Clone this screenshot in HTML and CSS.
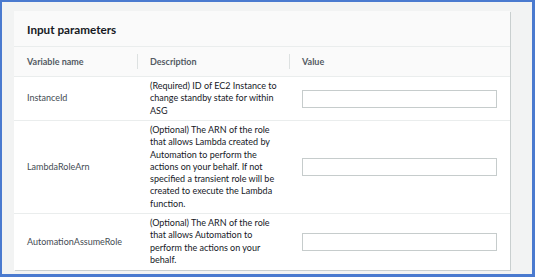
FILE: index.html
```html
<!DOCTYPE html>
<html lang="en">
<head>
  <meta charset="UTF-8">
  <title>Input parameters</title>
  <link rel="stylesheet" href="styles.css">
</head>
<body>
  <div class="frame">
    <div class="card">
      <div class="card-header">
        <h2>Input parameters</h2>
      </div>
      <table class="params">
        <thead>
          <tr>
            <th class="col-name">Variable name</th>
            <th class="col-desc">Description</th>
            <th class="col-value">Value</th>
          </tr>
        </thead>
        <tbody>
          <tr class="row-1">
            <td>InstanceId</td>
            <td class="desc">(Required) ID of EC2 Instance to change standby state for within ASG</td>
            <td><input type="text" class="value-input"></td>
          </tr>
          <tr class="row-2">
            <td>LambdaRoleArn</td>
            <td class="desc">(Optional) The ARN of the role that allows Lambda created by Automation to perform the actions on your behalf. If not specified a transient role will be created to execute the Lambda function.</td>
            <td><input type="text" class="value-input"></td>
          </tr>
          <tr class="row-3">
            <td>AutomationAssumeRole</td>
            <td class="desc">(Optional) The ARN of the role that allows Automation to perform the actions on your behalf.</td>
            <td><input type="text" class="value-input"></td>
          </tr>
        </tbody>
      </table>
    </div>
  </div>
</body>
</html>
```

FILE: styles.css
```css
body {
  margin: 0;
  font-family: Lato, 'Open Sans', sans-serif;
}

.frame {
  width: 535px;
  height: 277px;
  box-sizing: border-box;
  border: 2px solid #4a7acf;
  border-right-width: 3px;
  border-bottom-width: 3px;
  background: #f2f3f3;
  padding: 9px 22px 0 12px;
}

.card {
  width: 496px;
  height: 259px;
  background: #ffffff;
  box-shadow: 1px 1px 0 #c9cfcf;
  overflow: hidden;
}

.card-header {
  height: 36px;
  box-sizing: border-box;
  padding: 0 13px;
  display: flex;
  align-items: center;
  background: #fafafa;
  border-bottom: 1px solid #eaeded;
}

.card-header h2 {
  margin: 0;
  font-size: 11.7px;
  font-weight: 700;
  color: #16191f;
}

.params {
  width: 100%;
  border-collapse: collapse;
  table-layout: fixed;
}

.params th {
  height: 29px;
  padding: 0 13px;
  text-align: left;
  font-size: 9px;
  font-weight: 700;
  color: #545b64;
  background: #fafafa;
  border-bottom: 1px solid #eaeded;
}

.params th + th {
  background: #fafafa linear-gradient(#dde1e1, #dde1e1) left center / 1px 15px no-repeat;
}

.col-name {
  width: 97px;
}

.params th.col-desc {
  width: 128px;
  padding-right: 11px;
}

.params td {
  padding: 3px 13px;
  font-size: 9px;
  line-height: 12.3px;
  color: #444b53;
  vertical-align: middle;
  border-bottom: 1px solid #eaeded;
}

.params td.desc {
  padding-right: 11px;
  color: #16191f;
}

.params tr:last-child td {
  border-bottom: none;
}

.row-1 td {
  height: 37px;
}

.row-2 td {
  height: 86px;
}

.row-3 td {
  height: 49px;
}

.value-input {
  display: block;
  width: 195px;
  height: 18px;
  box-sizing: border-box;
  margin: 0;
  border: 1px solid #c6cccc;
  background: #ffffff;
  padding: 0 6px;
}
```
